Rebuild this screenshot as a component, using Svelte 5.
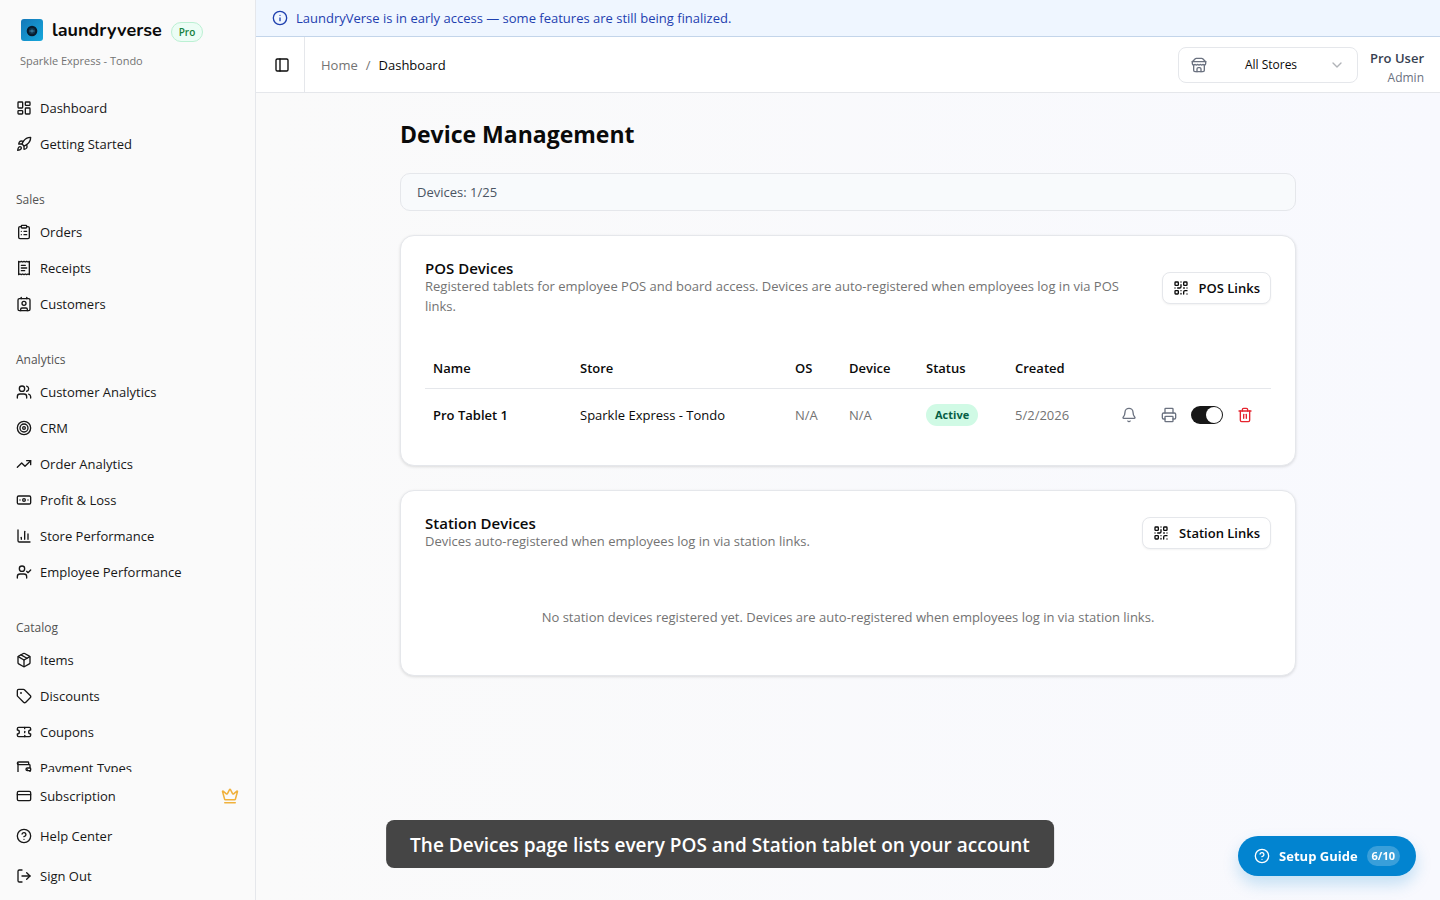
<script>
const mainLinks = [
{ label: 'Dashboard', icon: 'dashboard' },
{ label: 'Getting Started', icon: 'rocket' }
];

const groups = [
{
title: 'Sales',
links: [
{ label: 'Orders', icon: 'clipboard' },
{ label: 'Receipts', icon: 'receipt' },
{ label: 'Customers', icon: 'contact' }
]
},
{
title: 'Analytics',
links: [
{ label: 'Customer Analytics', icon: 'users' },
{ label: 'CRM', icon: 'target' },
{ label: 'Order Analytics', icon: 'trending' },
{ label: 'Profit & Loss', icon: 'banknote' },
{ label: 'Store Performance', icon: 'chart' },
{ label: 'Employee Performance', icon: 'userCheck' }
]
},
{
title: 'Catalog',
links: [
{ label: 'Items', icon: 'box' },
{ label: 'Discounts', icon: 'tag' },
{ label: 'Coupons', icon: 'ticket' },
{ label: 'Payment Types', icon: 'wallet' }
]
}
];

const icons = {
dashboard: '<rect width="7" height="9" x="3" y="3" rx="1"/><rect width="7" height="5" x="14" y="3" rx="1"/><rect width="7" height="9" x="14" y="12" rx="1"/><rect width="7" height="5" x="3" y="16" rx="1"/>',
rocket: '<path d="M4.5 16.5c-1.5 1.26-2 5-2 5s3.74-.5 5-2c.71-.84.7-2.13-.09-2.91a2.18 2.18 0 0 0-2.91-.09z"/><path d="m12 15-3-3a22 22 0 0 1 2-3.95A12.88 12.88 0 0 1 22 2c0 2.72-.78 7.5-6 11a22.35 22.35 0 0 1-4 2z"/><path d="M9 12H4s.55-3.03 2-4c1.62-1.08 5 0 5 0"/><path d="M12 15v5s3.03-.55 4-2c1.08-1.62 0-5 0-5"/>',
clipboard: '<rect width="8" height="4" x="8" y="2" rx="1"/><path d="M16 4h2a2 2 0 0 1 2 2v14a2 2 0 0 1-2 2H6a2 2 0 0 1-2-2V6a2 2 0 0 1 2-2h2"/><path d="M12 11h4"/><path d="M12 16h4"/><path d="M8 11h.01"/><path d="M8 16h.01"/>',
receipt: '<path d="M4 2v20l2-1 2 1 2-1 2 1 2-1 2 1 2-1 2 1V2l-2 1-2-1-2 1-2-1-2 1-2-1-2 1Z"/><path d="M14 8H8"/><path d="M16 12H8"/><path d="M13 16H8"/>',
contact: '<path d="M16 2v2"/><path d="M7 22v-2a2 2 0 0 1 2-2h6a2 2 0 0 1 2 2v2"/><path d="M8 2v2"/><circle cx="12" cy="11" r="3"/><rect x="3" y="4" width="18" height="18" rx="2"/>',
users: '<path d="M16 21v-2a4 4 0 0 0-4-4H6a4 4 0 0 0-4 4v2"/><circle cx="9" cy="7" r="4"/><path d="M22 21v-2a4 4 0 0 0-3-3.87"/><path d="M16 3.13a4 4 0 0 1 0 7.75"/>',
target: '<circle cx="12" cy="12" r="10"/><circle cx="12" cy="12" r="6"/><circle cx="12" cy="12" r="2"/>',
trending: '<path d="m22 7-8.5 8.5-5-5L2 17"/><path d="M16 7h6v6"/>',
banknote: '<rect width="20" height="12" x="2" y="6" rx="2"/><circle cx="12" cy="12" r="2"/><path d="M6 12h.01M18 12h.01"/>',
chart: '<path d="M3 3v16a2 2 0 0 0 2 2h16"/><path d="M18 17V9"/><path d="M13 17V5"/><path d="M8 17v-3"/>',
userCheck: '<path d="m16 11 2 2 4-4"/><path d="M16 21v-2a4 4 0 0 0-4-4H6a4 4 0 0 0-4 4v2"/><circle cx="9" cy="7" r="4"/>',
box: '<path d="M11 21.73a2 2 0 0 0 2 0l7-4A2 2 0 0 0 21 16V8a2 2 0 0 0-1-1.73l-7-4a2 2 0 0 0-2 0l-7 4A2 2 0 0 0 3 8v8a2 2 0 0 0 1 1.73z"/><path d="M12 22V12"/><path d="m3.3 7 8.7 5 8.7-5"/><path d="m7.5 4.27 9 5.15"/>',
tag: '<path d="M12.586 2.586A2 2 0 0 0 11.172 2H4a2 2 0 0 0-2 2v7.172a2 2 0 0 0 .586 1.414l8.704 8.704a2.426 2.426 0 0 0 3.42 0l6.58-6.58a2.426 2.426 0 0 0 0-3.42z"/><circle cx="7.5" cy="7.5" r=".5" fill="currentColor"/>',
ticket: '<path d="M2 9a3 3 0 0 1 0 6v2a2 2 0 0 0 2 2h16a2 2 0 0 0 2-2v-2a3 3 0 0 1 0-6V7a2 2 0 0 0-2-2H4a2 2 0 0 0-2 2Z"/><path d="M13 5v2"/><path d="M13 17v2"/><path d="M13 11v2"/>',
wallet: '<path d="M17 14h.01"/><path d="M19 7V4a1 1 0 0 0-1-1H4a2 2 0 0 0 0 4h16a1 1 0 0 1 1 1v4h-4a2 2 0 0 0 0 4h4a1 1 0 0 0 1-1v-2a1 1 0 0 0-1-1"/><path d="M3 5v14a2 2 0 0 0 2 2h15a1 1 0 0 0 1-1v-4"/>',
card: '<rect width="20" height="14" x="2" y="5" rx="2"/><path d="M2 10h20"/>',
help: '<circle cx="12" cy="12" r="10"/><path d="M9.09 9a3 3 0 0 1 5.83 1c0 2-3 3-3 3"/><path d="M12 17h.01"/>',
logout: '<path d="m16 17 5-5-5-5"/><path d="M21 12H9"/><path d="M9 21H5a2 2 0 0 1-2-2V5a2 2 0 0 1 2-2h4"/>',
crown: '<path d="M11.562 3.266a.5.5 0 0 1 .876 0L15.39 8.87a1 1 0 0 0 1.516.294L21.183 5.5a.5.5 0 0 1 .798.519l-2.834 10.246a1 1 0 0 1-.956.734H5.81a1 1 0 0 1-.957-.734L2.02 6.02a.5.5 0 0 1 .798-.519l4.276 3.664a1 1 0 0 0 1.516-.294z"/><path d="M5 21h14"/>',
info: '<circle cx="12" cy="12" r="10"/><path d="M12 16v-4"/><path d="M12 8h.01"/>',
panel: '<rect width="18" height="18" x="3" y="3" rx="2"/><path d="M9 3v18"/>',
store: '<path d="m2 7 4.41-4.41A2 2 0 0 1 7.83 2h8.34a2 2 0 0 1 1.42.59L22 7"/><path d="M4 12v8a2 2 0 0 0 2 2h12a2 2 0 0 0 2-2v-8"/><path d="M15 22v-4a2 2 0 0 0-2-2h-2a2 2 0 0 0-2 2v4"/><path d="M2 7h20"/><path d="M22 7v3a2 2 0 0 1-2 2 2.7 2.7 0 0 1-1.59-.63.7.7 0 0 0-.82 0A2.7 2.7 0 0 1 16 12a2.7 2.7 0 0 1-1.59-.63.7.7 0 0 0-.82 0A2.7 2.7 0 0 1 12 12a2.7 2.7 0 0 1-1.59-.63.7.7 0 0 0-.82 0A2.7 2.7 0 0 1 8 12a2.7 2.7 0 0 1-1.59-.63.7.7 0 0 0-.82 0A2.7 2.7 0 0 1 4 12a2 2 0 0 1-2-2V7"/>',
chevron: '<path d="m6 9 6 6 6-6"/>',
qr: '<rect width="5" height="5" x="3" y="3" rx="1"/><rect width="5" height="5" x="16" y="3" rx="1"/><rect width="5" height="5" x="3" y="16" rx="1"/><path d="M21 16h-3a2 2 0 0 0-2 2v3"/><path d="M21 21v.01"/><path d="M12 7v3a2 2 0 0 1-2 2H7"/><path d="M3 12h.01"/><path d="M12 3h.01"/><path d="M12 16v.01"/><path d="M16 12h1"/><path d="M21 12v.01"/><path d="M12 21v-1"/>',
bell: '<path d="M10.268 21a2 2 0 0 0 3.464 0"/><path d="M3.262 15.326A1 1 0 0 0 4 17h16a1 1 0 0 0 .74-1.673C19.41 13.956 18 12.499 18 8A6 6 0 0 0 6 8c0 4.499-1.411 5.956-2.738 7.326"/>',
printer: '<path d="M6 18H4a2 2 0 0 1-2-2v-5a2 2 0 0 1 2-2h16a2 2 0 0 1 2 2v5a2 2 0 0 1-2 2h-2"/><path d="M6 9V3a1 1 0 0 1 1-1h10a1 1 0 0 1 1 1v6"/><rect x="6" y="14" width="12" height="8" rx="1"/>',
trash: '<path d="M3 6h18"/><path d="M19 6v14a2 2 0 0 1-2 2H7a2 2 0 0 1-2-2V6"/><path d="M8 6V4a2 2 0 0 1 2-2h4a2 2 0 0 1 2 2v2"/><path d="M10 11v6"/><path d="M14 11v6"/>'
};

const devices = [
{ name: 'Pro Tablet 1', store: 'Sparkle Express - Tondo', os: 'N/A', device: 'N/A', status: 'Active', created: '5/2/2026' }
];

let enabled = $state(true);
let collapsed = $state(false);
</script>

{#snippet icon(name, size = 16)}
<svg class="icon" width={size} height={size} viewBox="0 0 24 24" aria-hidden="true">{@html icons[name]}</svg>
{/snippet}

{#snippet navLink(link)}
<a class="nav-link" href="#{link.icon}">
{@render icon(link.icon)}
<span>{link.label}</span>
</a>
{/snippet}

<div class="shell">
{#if !collapsed}
<aside class="sidebar">
<div class="brand">
<div class="brand-row">
<svg class="logo" width="22" height="22" viewBox="0 0 22 22" aria-hidden="true">
<defs>
<linearGradient id="logo-fill" x1="0" y1="0" x2="1" y2="1">
<stop offset="0" stop-color="#1477b8" />
<stop offset="1" stop-color="#16a8dc" />
</linearGradient>
</defs>
<rect width="22" height="22" rx="3" fill="url(#logo-fill)" />
<circle cx="11" cy="12" r="5.3" fill="#081a2b" />
<circle cx="11" cy="12" r="3.2" fill="#10324a" />
<path d="M8.5 12h5M11 10.6v2.8" fill="none" stroke="#3d7f9f" stroke-width="1.2" />
</svg>
<span class="brand-name">laundryverse</span>
<span class="plan">Pro</span>
</div>
<p class="brand-store">Sparkle Express - Tondo</p>
</div>

<nav class="nav">
<div class="group">
{#each mainLinks as link}
{@render navLink(link)}
{/each}
</div>
{#each groups as group}
<div class="group">
<div class="group-title">{group.title}</div>
{#each group.links as link}
{@render navLink(link)}
{/each}
</div>
{/each}
</nav>

<div class="sidebar-footer">
<a class="nav-link" href="#subscription">
{@render icon('card')}
<span>Subscription</span>
<span class="crown">{@render icon('crown', 18)}</span>
</a>
<a class="nav-link" href="#help">
{@render icon('help')}
<span>Help Center</span>
</a>
<button class="nav-link" type="button">
{@render icon('logout')}
<span>Sign Out</span>
</button>
</div>
</aside>
{/if}

<div class="page">
<div class="banner">
{@render icon('info')}
<span>LaundryVerse is in early access — some features are still being finalized.</span>
</div>

<header class="topbar">
<button class="trigger" type="button" aria-label="Toggle sidebar" onclick={() => (collapsed = !collapsed)}>
{@render icon('panel')}
</button>
<nav class="crumbs" aria-label="Breadcrumb">
<a href="#home">Home</a>
<span>/</span>
<span class="current">Dashboard</span>
</nav>
<div class="store-picker">
<span class="store-icon">{@render icon('store')}</span>
<select aria-label="Store">
<option>All Stores</option>
<option>Sparkle Express - Tondo</option>
</select>
<span class="chevron">{@render icon('chevron')}</span>
</div>
<div class="user">
<strong>Pro User</strong>
<span>Admin</span>
</div>
</header>

<main>
<div class="content">
<h1>Device Management</h1>

<div class="usage">Devices: 1/25</div>

<section class="card">
<div class="card-header">
<div>
<h2>POS Devices</h2>
<p>Registered tablets for employee POS and board access. Devices are auto-registered when employees log in via POS links.</p>
</div>
<button class="outline-btn" type="button">
{@render icon('qr')}
POS Links
</button>
</div>

<table>
<colgroup>
<col class="col-name" />
<col class="col-store" />
<col class="col-os" />
<col class="col-device" />
<col class="col-status" />
<col class="col-created" />
<col class="col-actions" />
</colgroup>
<thead>
<tr>
<th>Name</th>
<th>Store</th>
<th>OS</th>
<th>Device</th>
<th>Status</th>
<th>Created</th>
<th aria-label="Actions"></th>
</tr>
</thead>
<tbody>
{#each devices as row}
<tr>
<td class="name">{row.name}</td>
<td>{row.store}</td>
<td class="muted">{row.os}</td>
<td class="muted">{row.device}</td>
<td><span class="status">{row.status}</span></td>
<td class="muted">{row.created}</td>
<td>
<div class="actions">
<button class="icon-btn bell" type="button" aria-label="Notifications">{@render icon('bell')}</button>
<button class="icon-btn" type="button" aria-label="Printer">{@render icon('printer')}</button>
<input class="switch" type="checkbox" role="switch" aria-label="Device enabled" bind:checked={enabled} />
<button class="icon-btn danger" type="button" aria-label="Delete device">{@render icon('trash')}</button>
</div>
</td>
</tr>
{/each}
</tbody>
</table>
</section>

<section class="card">
<div class="card-header">
<div>
<h2>Station Devices</h2>
<p>Devices auto-registered when employees log in via station links.</p>
</div>
<button class="outline-btn" type="button">
{@render icon('qr')}
Station Links
</button>
</div>
<p class="empty">No station devices registered yet. Devices are auto-registered when employees log in via station links.</p>
</section>
</div>
</main>
</div>
</div>

<div class="caption">The Devices page lists every POS and Station tablet on your account</div>

<button class="guide" type="button">
{@render icon('help')}
<span>Setup Guide</span>
<span class="count">6/10</span>
</button>

<style>
:global(body) {
font-family: 'Segoe UI', 'Open Sans', 'Noto Sans', sans-serif;
font-size: 13px;
line-height: 20px;
color: #0a0a0a;
}

* {
box-sizing: border-box;
}

h1,
h2,
p {
margin: 0;
}

button,
select {
font: inherit;
color: inherit;
cursor: pointer;
}

a {
color: inherit;
text-decoration: none;
}

.icon {
display: block;
flex-shrink: 0;
fill: none;
stroke: currentColor;
stroke-width: 2;
stroke-linecap: round;
stroke-linejoin: round;
}

.shell {
display: flex;
height: 100vh;
}

.sidebar {
display: flex;
flex-direction: column;
flex: 0 0 256px;
background: #fafafa;
border-right: 1px solid #e5e7eb;
}

.brand {
padding: 16px 20px 13px;
}

.brand-row {
display: flex;
align-items: center;
gap: 9px;
height: 28px;
}

.logo {
margin-left: 1px;
}

.brand-name {
font-family: Nunito, Lato, sans-serif;
font-size: 18px;
font-weight: 700;
}

.plan {
margin-top: 4px;
padding: 0 7px;
border: 1px solid #bbf0d3;
border-radius: 10px;
background: #ecfdf5;
color: #15803d;
font-size: 10px;
font-weight: 600;
line-height: 18px;
}

.brand-store {
padding-top: 7px;
color: #737373;
font-size: 11px;
}

.nav {
display: flex;
flex: 1;
flex-direction: column;
gap: 8px;
min-height: 0;
overflow-y: auto;
scrollbar-width: none;
}

.group {
display: flex;
flex-direction: column;
gap: 4px;
padding: 8px;
}

.group-title {
padding: 4px 8px 0;
color: #525252;
font-size: 12px;
font-weight: 500;
line-height: 24px;
}

.nav-link {
display: flex;
align-items: center;
flex-shrink: 0;
gap: 8px;
height: 32px;
padding: 0 8px;
border: none;
border-radius: 8px;
background: none;
color: #171717;
}

.nav-link:hover {
background: #f0f0f0;
}

.sidebar-footer {
display: flex;
flex-direction: column;
gap: 8px;
padding: 8px;
}

.crown {
margin-left: auto;
color: #f0b13c;
}

.page {
display: flex;
flex: 1;
flex-direction: column;
min-width: 0;
}

.banner {
display: flex;
align-items: center;
gap: 8px;
padding: 8px 16px;
border-bottom: 1px solid #c3d5ea;
background: #eff6ff;
color: #1e40af;
}

.topbar {
display: flex;
align-items: center;
height: 56px;
flex-shrink: 0;
padding-right: 16px;
border-bottom: 1px solid #e5e7eb;
background: #fff;
}

.trigger {
display: grid;
place-items: center;
align-self: stretch;
width: 49px;
padding: 0 0 0 4px;
border: none;
border-right: 1px solid #e5e7eb;
background: none;
}

.crumbs {
display: flex;
gap: 8px;
margin-right: auto;
padding-left: 16px;
color: #737373;
}

.crumbs .current {
color: #0a0a0a;
}

.store-picker {
position: relative;
width: 180px;
}

.store-picker select {
width: 100%;
height: 36px;
padding: 0 36px 0 42px;
border: 1px solid #e5e7eb;
border-radius: 8px;
background: #fff;
appearance: none;
font-size: 12px;
text-align: center;
text-align-last: center;
}

.store-icon,
.chevron {
position: absolute;
top: 10px;
pointer-events: none;
}

.store-icon {
left: 13px;
color: #6b7280;
}

.chevron {
right: 13px;
color: #b0b3b8;
}

.user {
display: flex;
flex-direction: column;
margin-left: 12px;
padding-top: 6px;
text-align: right;
}

.user strong {
color: #374151;
font-size: 13px;
font-weight: 600;
}

.user span {
color: #6b7280;
font-size: 12px;
}

main {
flex: 1;
min-height: 0;
overflow-y: auto;
padding: 24px;
background: linear-gradient(90deg, #fafafa, #f8f9fe);
}

.content {
display: flex;
flex-direction: column;
gap: 24px;
max-width: 896px;
margin: 0 auto;
}

h1 {
padding-top: 2px;
font-size: 23px;
font-weight: 700;
line-height: 30px;
}

.usage {
padding: 8px 16px;
border: 1px solid #e5e7eb;
border-radius: 10px;
background: #f8fafc;
color: #4b5563;
}

.card {
padding: 24px;
border: 1px solid #e5e7eb;
border-radius: 14px;
background: #fff;
box-shadow: 0 1px 3px rgba(0, 0, 0, 0.12);
}

.card-header {
display: flex;
align-items: center;
justify-content: space-between;
gap: 24px;
margin-bottom: 32px;
}

h2 {
font-size: 15px;
font-weight: 600;
line-height: 16px;
}

.card-header p {
color: #737373;
}

.outline-btn {
display: flex;
align-items: center;
flex-shrink: 0;
gap: 10px;
height: 32px;
padding: 0 10px;
border: 1px solid #e5e7eb;
border-radius: 8px;
background: #fff;
box-shadow: 0 1px 2px rgba(0, 0, 0, 0.05);
font-weight: 600;
}

table {
width: 100%;
table-layout: fixed;
border-collapse: collapse;
}

.col-name {
width: 147px;
}

.col-store {
width: 215px;
}

.col-os {
width: 54px;
}

.col-device {
width: 77px;
}

.col-status {
width: 89px;
}

.col-created {
width: 100px;
}

.col-actions {
width: 164px;
}

th,
td {
padding: 0 8px;
text-align: left;
white-space: nowrap;
}

th {
height: 40px;
border-bottom: 1px solid #e5e7eb;
font-weight: 600;
}

td {
height: 53px;
}

.name {
font-weight: 600;
}

.muted {
color: #737373;
}

.status {
display: inline-block;
padding: 1px 9px;
border-radius: 11px;
background: #d0fae5;
color: #065f46;
font-size: 11px;
font-weight: 700;
}

.actions {
display: flex;
align-items: center;
justify-content: flex-end;
gap: 8px;
padding-right: 4px;
}

.icon-btn {
display: grid;
place-items: center;
width: 28px;
height: 32px;
padding: 0;
border: none;
background: none;
color: #6b7280;
}

.bell {
margin-right: 4px;
}

.danger {
color: #e5252f;
}

.switch {
display: flex;
align-items: center;
justify-content: flex-start;
width: 32px;
height: 18px;
margin: 0;
padding: 1px;
border-radius: 9px;
background: #d4d4d4;
appearance: none;
cursor: pointer;
}

.switch::before {
content: '';
width: 16px;
height: 16px;
border-radius: 50%;
background: #fff;
}

.switch:checked {
justify-content: flex-end;
background: #171717;
}

.empty {
padding: 24px 0;
color: #737373;
text-align: center;
}

.caption {
position: fixed;
bottom: 32px;
left: 50%;
transform: translateX(-50%);
padding: 11px 24px 9px;
border-radius: 8px;
background: #454545;
color: #fff;
font-size: 19px;
font-weight: 600;
line-height: 28px;
white-space: nowrap;
}

.guide {
position: fixed;
right: 24px;
bottom: 24px;
display: flex;
align-items: center;
gap: 9px;
height: 40px;
padding: 0 16px;
border: none;
border-radius: 20px;
background: #0284d0;
box-shadow: 0 8px 16px rgba(2, 132, 208, 0.22);
color: #fff;
font-weight: 700;
}

.count {
padding: 0 5px;
border-radius: 10px;
background: rgba(255, 255, 255, 0.22);
font-size: 11px;
}
</style>
